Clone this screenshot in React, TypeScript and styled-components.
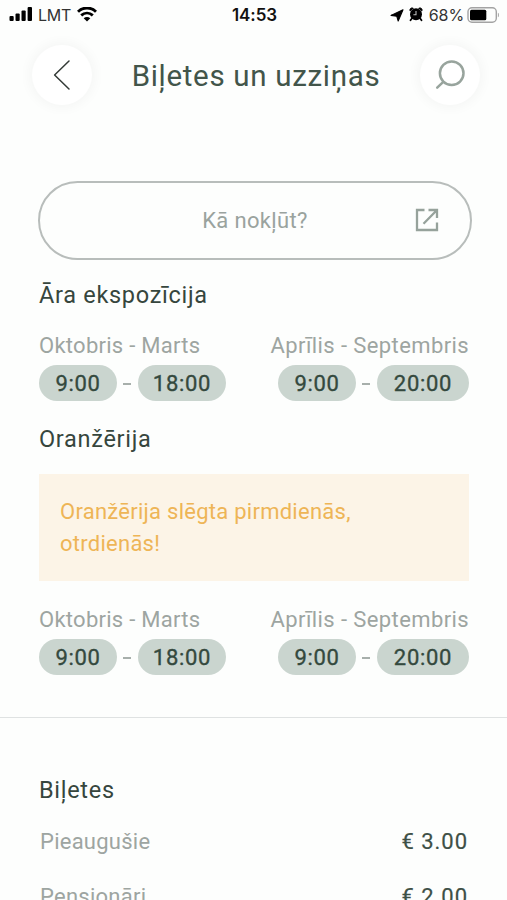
import React from 'react';
import styled, { createGlobalStyle } from 'styled-components';

const GlobalStyle = createGlobalStyle`
  * { box-sizing: border-box; }
  body { margin: 0; background: #fdfefd; }
`;

const Screen = styled.main`
  width: 100%;
  height: 900px;
  overflow: hidden;
  display: flex;
  flex-direction: column;
  background: #fdfefd;
  color: #36463d;
  font-family: Roboto, 'Noto Sans', sans-serif;
`;

const StatusBar = styled.div`
  height: 30px;
  flex: none;
  display: grid;
  grid-template-columns: 1fr auto 1fr;
  align-items: center;
  padding: 0 7px 0 9px;
  color: #111;
  font-family: Inter, sans-serif;
`;

const StatusGroup = styled.div<{ $end?: boolean }>`
  display: flex;
  align-items: center;
  justify-content: ${(p) => (p.$end ? 'flex-end' : 'flex-start')};
  svg { display: block; flex: none; }
`;

const Carrier = styled.span`
  margin: 0 6px 0 5px;
  font-size: 16px;
  letter-spacing: -0.3px;
  line-height: 30px;
  color: #333;
`;

const Clock = styled.span`
  font-size: 17px;
  font-weight: 600;
  letter-spacing: -0.1px;
  line-height: 30px;
`;

const Percent = styled.span`
  margin: 0 3px 0 6px;
  font-size: 16px;
  letter-spacing: -0.1px;
  line-height: 30px;
  color: #333;
`;

const Spacer = styled.i`
  width: 5px;
`;

const Header = styled.header`
  height: 91px;
  flex: none;
  display: flex;
  align-items: center;
  justify-content: space-between;
  padding: 0 27px 1px 32px;
`;

const RoundButton = styled.button`
  width: 60px;
  height: 60px;
  flex: none;
  display: grid;
  place-items: center;
  padding: 0;
  border: 0;
  border-radius: 50%;
  background: #fff;
  box-shadow: 0 0 12px 3px rgba(0, 0, 0, 0.035);
  svg { display: block; }
`;

const Title = styled.h1`
  margin: 0;
  padding-top: 1px;
  font-size: 29.5px;
  font-weight: 400;
  line-height: 40px;
  letter-spacing: 0.68px;
  white-space: nowrap;
  color: #42554a;
`;

const Content = styled.div`
  flex: none;
  padding: 60px 38px 42px 39px;
  border-bottom: 1px solid #dfe2e2;
`;

const DirectionsButton = styled.button`
  width: 434px;
  height: 79px;
  display: grid;
  grid-template-columns: 1fr auto 1fr;
  align-items: center;
  margin-left: -1px;
  padding: 0 31px;
  border: 2px solid #b8bdbb;
  border-radius: 40px;
  background: transparent;
  color: #9aa39e;
  font: 400 22px Roboto, 'Noto Sans', sans-serif;
  letter-spacing: 0.35px;
  span { grid-column: 2; }
  svg { display: block; justify-self: end; margin-bottom: 2px; }
`;

const Heading = styled.h2`
  height: 30px;
  margin: 0;
  font-size: 23.5px;
  font-weight: 400;
  line-height: 30px;
  letter-spacing: 0.7px;
`;

const AreaTitle = styled(Heading)<{ $top: number }>`
  margin-top: ${(p) => p.$top}px;
`;

const Seasons = styled.div<{ $top: number }>`
  display: flex;
  justify-content: space-between;
  margin-top: ${(p) => p.$top}px;
`;

const Season = styled.div<{ $end?: boolean }>`
  display: flex;
  flex-direction: column;
  align-items: ${(p) => (p.$end ? 'flex-end' : 'flex-start')};
`;

const Months = styled.div<{ $spacing: number }>`
  height: 34px;
  line-height: 30px;
  font-size: 22px;
  letter-spacing: ${(p) => p.$spacing}px;
  color: #9da5a1;
  white-space: nowrap;
`;

const Hours = styled.div`
  display: flex;
  align-items: center;
`;

const Time = styled.span<{ $width: number }>`
  width: ${(p) => p.$width}px;
  height: 36px;
  border-radius: 18px;
  background: #cad5cf;
  color: #34493e;
  font-size: 22px;
  -webkit-text-stroke: 0.35px currentColor;
  line-height: 37px;
  letter-spacing: 0.7px;
  text-align: center;
`;

const Dash = styled.i`
  width: 8px;
  height: 2px;
  margin: 2px 7px 0 6px;
  background: #a7afab;
`;

const Notice = styled.div`
  width: 430px;
  height: 107px;
  margin-top: 20px;
  padding: 22px 21px;
  background: #fcf4e7;
  color: #eeb556;
  font-size: 22px;
  line-height: 32px;
  letter-spacing: 0.26px;
`;

const Tickets = styled.section`
  flex: none;
  padding: 57px 39px 0;
`;

const Prices = styled.div`
  display: flex;
  flex-direction: column;
  gap: 25px;
  margin-top: 22px;
`;

const Price = styled.div`
  display: flex;
  justify-content: space-between;
  padding: 0 0 0 1px;
  font-size: 22px;
  line-height: 30px;
  letter-spacing: 0.25px;
  color: #9da5a1;
`;

const Amount = styled.span`
  color: #3e5046;
  -webkit-text-stroke: 0.2px currentColor;
  letter-spacing: 0.95px;
`;

const Signal = () => (
  <svg width="24" height="16" viewBox="0 0 24 16" fill="#000">
    <rect x="0.5" y="9" width="4.2" height="4.9" rx="1" />
    <rect x="6.5" y="6.6" width="4.2" height="7.3" rx="1" />
    <rect x="12.5" y="3.4" width="4.2" height="10.5" rx="1" />
    <rect x="18.6" y="0" width="4.4" height="13.9" rx="1" />
  </svg>
);

const Wifi = () => (
  <svg width="20" height="16" viewBox="0 0 20 16" fill="none" stroke="#000" strokeWidth="2.9">
    <path d="M1 4.7C6.2-.2 13.8-.2 19 4.7M4.2 8.4c3.4-3 8.2-3 11.6 0" />
    <path d="M6.7 11.3c1.9-1.6 4.7-1.6 6.6 0L10 14.6z" fill="#000" stroke="none" />
  </svg>
);

const Location = () => (
  <svg width="14" height="13" viewBox="0 0 14 13">
    <path d="M13 .7 8.2 12 6.8 7.3 1 6.4z" fill="#000" stroke="#000" strokeWidth="1.1" strokeLinejoin="round" />
  </svg>
);

const Alarm = () => (
  <svg width="14" height="16" viewBox="0 0 14 16">
    <path d="M1.3 4.2C.1 2.3 2 0 4.5 1.4M12.7 4.2C13.9 2.3 12 0 9.5 1.4" fill="#000" stroke="#000" />
    <circle cx="7" cy="7.3" r="6" fill="#000" />
    <path d="M2.8 11.5 1.5 13.3M11.2 11.5l1.3 1.8" stroke="#000" strokeWidth="1.8" strokeLinecap="round" />
    <path d="M7 4v3.8H4.4" fill="none" stroke="#bbb" strokeWidth="1.1" />
  </svg>
);

const Battery = () => (
  <svg width="33" height="17" viewBox="0 0 33 17">
    <rect x="1" y=".7" width="28.3" height="14.5" rx="4" fill="none" stroke="#a3a3a3" strokeWidth="1.4" />
    <rect x="3" y="2.7" width="16.3" height="10.5" rx="1.5" fill="#000" />
    <path d="M30.9 5.7v4.6c1.5-.5 1.5-4.1 0-4.6z" fill="#aaa" />
  </svg>
);

const BackIcon = () => (
  <svg width="18" height="32" viewBox="0 0 18 32" fill="none" stroke="#333a36" strokeWidth="1.5" strokeLinecap="round" strokeLinejoin="round">
    <path d="M16 2 1.6 16 16 30" />
  </svg>
);

const SearchIcon = () => (
  <svg width="30" height="30" viewBox="0 0 30 30" fill="none" stroke="#98a49d" strokeWidth="2.5" strokeLinecap="round">
    <circle cx="16.7" cy="13.3" r="11.8" />
    <path d="m8.3 21.8-6.1 5.9" />
  </svg>
);

const ExternalIcon = () => (
  <svg width="24" height="24" viewBox="0 0 24 24" fill="none" stroke="#96a29b" strokeWidth="2.3">
    <path d="M9.5 2H2v20h20v-7.5M13.5 2H22v8M22 2 8.5 15.8" />
  </svg>
);

const SeasonHours = ({ top }: { top: number }) => (
  <Seasons $top={top}>
    <Season>
      <Months $spacing={0.27}>Oktobris - Marts</Months>
      <Hours><Time $width={78}>9:00</Time><Dash /><Time $width={88}>18:00</Time></Hours>
    </Season>
    <Season $end>
      <Months $spacing={0.4}>Aprīlis - Septembris</Months>
      <Hours><Time $width={78}>9:00</Time><Dash /><Time $width={92}>20:00</Time></Hours>
    </Season>
  </Seasons>
);

export default function App() {
  return (
    <Screen>
      <GlobalStyle />
      <StatusBar>
        <StatusGroup><Signal /><Carrier>LMT</Carrier><Wifi /></StatusGroup>
        <Clock>14:53</Clock>
        <StatusGroup $end><Location /><Spacer /><Alarm /><Percent>68%</Percent><Battery /></StatusGroup>
      </StatusBar>
      <Header>
        <RoundButton aria-label="Atpakaļ"><BackIcon /></RoundButton>
        <Title>Biļetes un uzziņas</Title>
        <RoundButton aria-label="Meklēt"><SearchIcon /></RoundButton>
      </Header>
      <Content>
        <DirectionsButton><span>Kā nokļūt?</span><ExternalIcon /></DirectionsButton>
        <AreaTitle $top={20}>Āra ekspozīcija</AreaTitle>
        <SeasonHours top={21} />
        <AreaTitle $top={23}>Oranžērija</AreaTitle>
        <Notice>Oranžērija slēgta pirmdienās, otrdienās!</Notice>
        <SeasonHours top={24} />
      </Content>
      <Tickets>
        <Heading>Biļetes</Heading>
        <Prices>
          <Price><span>Pieaugušie</span><Amount>€ 3.00</Amount></Price>
          <Price><span>Pensionāri</span><Amount>€ 2.00</Amount></Price>
        </Prices>
      </Tickets>
    </Screen>
  );
}
